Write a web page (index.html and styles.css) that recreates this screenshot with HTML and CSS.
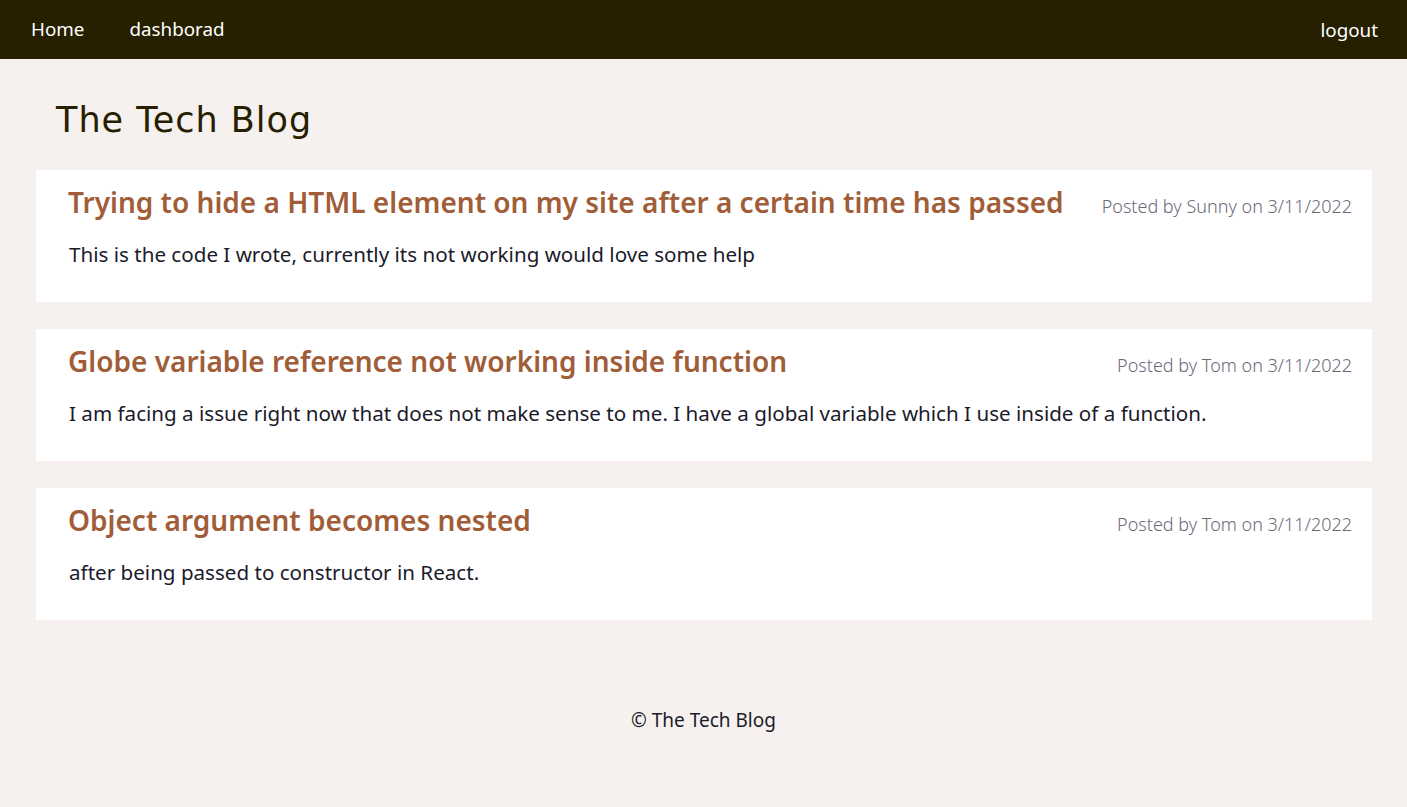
FILE: index.html
```html
<!DOCTYPE html>
<html lang="en">
<head>
<meta charset="utf-8">
<title>The Tech Blog</title>
<link rel="stylesheet" href="styles.css">
</head>
<body>
<nav class="navbar">
  <div class="nav-left">
    <a class="nav-link" href="#">Home</a>
    <a class="nav-link" href="#">dashborad</a>
  </div>
  <a class="nav-link logout" href="#">logout</a>
</nav>
<main class="content">
  <h1 class="site-title">The Tech Blog</h1>
  <section class="posts">
    <article class="post">
      <div class="post-head">
        <h2 class="post-title">Trying to hide a HTML element on my site after a certain time has passed</h2>
        <p class="post-meta">Posted by Sunny on 3/11/2022</p>
      </div>
      <p class="post-body">This is the code I wrote, currently its not working would love some help</p>
    </article>
    <article class="post">
      <div class="post-head">
        <h2 class="post-title">Globe variable reference not working inside function</h2>
        <p class="post-meta">Posted by Tom on 3/11/2022</p>
      </div>
      <p class="post-body">I am facing a issue right now that does not make sense to me. I have a global variable which I use inside of a function.</p>
    </article>
    <article class="post">
      <div class="post-head">
        <h2 class="post-title">Object argument becomes nested</h2>
        <p class="post-meta">Posted by Tom on 3/11/2022</p>
      </div>
      <p class="post-body">after being passed to constructor in React.</p>
    </article>
  </section>
</main>
<footer class="footer">© The Tech Blog</footer>
</body>
</html>
```
FILE: styles.css
```css
* { box-sizing: border-box; }
html, body { margin: 0; padding: 0; }
body {
  background: #f6f1ee;
  font-family: "Noto Sans", "Open Sans", sans-serif;
  color: #1b1b2b;
  min-height: 807px;
}
.navbar {
  height: 59px;
  background: #262000;
  display: flex;
  align-items: center;
  justify-content: space-between;
  padding: 0 29px 0 31px;
}
.nav-left { display: flex; gap: 45px; }
.nav-link {
  color: #ffffff;
  text-decoration: none;
  font-size: 18.8px;
  line-height: 24px;
}
.nav-left .nav-link { margin-top: -2px; }
.content { padding: 0 35px 0 36px; }
.site-title {
  margin: 0;
  padding: 40px 0 29px 20px;
  font-family: "DejaVu Sans", sans-serif;
  font-weight: 500;
  font-size: 35px;
  color: #262000;
  letter-spacing: 1px;
  line-height: 42px;
}
.posts { display: flex; flex-direction: column; gap: 27px; }
.post {
  background: #ffffff;
  height: 132px;
  padding: 12px 20px 0 32px;
}
.post-head {
  display: flex;
  justify-content: space-between;
  align-items: baseline;
}
.post-title {
  margin: 0;
  font-size: 28px;
  font-weight: 600;
  color: #a05d38;
  line-height: 40px;
}
.post-meta {
  margin: 0;
  font-size: 18px;
  font-weight: 300;
  color: #6d6a78;
}
.post-body {
  margin: 18px 0 0 1px;
  font-size: 20.6px;
  line-height: 28px;
}
.footer {
  text-align: center;
  font-size: 19px;
  padding-top: 87px;
}
```
